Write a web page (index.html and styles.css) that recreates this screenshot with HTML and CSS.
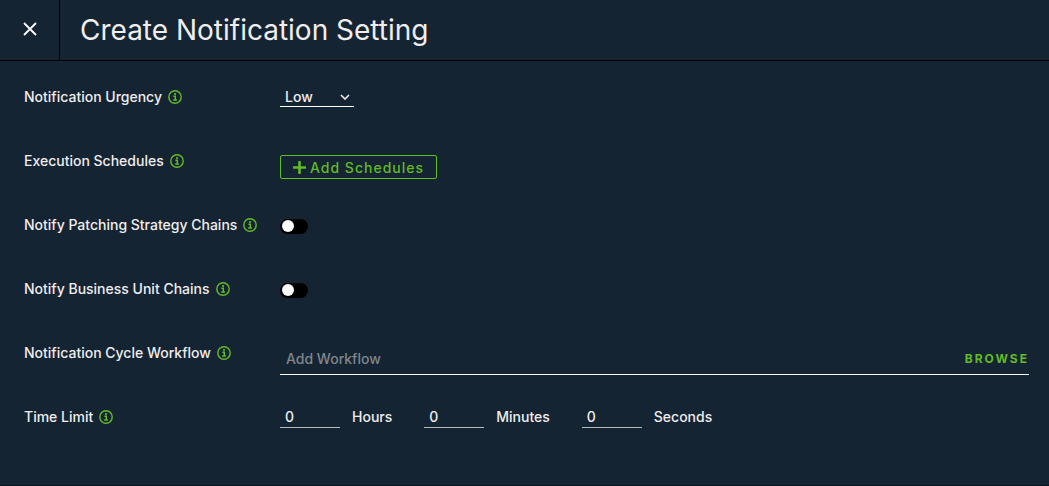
FILE: index.html
```html
<!DOCTYPE html>
<html lang="en">
<head>
    <meta charset="UTF-8">
    <meta name="viewport" content="width=device-width, initial-scale=1.0">
    <title>Create Notification Setting</title>
    <link rel="stylesheet" href="styles.css">
</head>
<body>

    <svg class="sprite" aria-hidden="true">
        <symbol id="info" viewBox="0 0 14 14">
            <circle cx="7" cy="7" r="6.2" fill="none" stroke="currentColor" stroke-width="1.4"/>
            <circle cx="7" cy="4" r="1.1" fill="currentColor"/>
            <path d="M5.4 6.3H7.3V10M5.2 10H8.9" fill="none" stroke="currentColor" stroke-width="1.4"/>
        </symbol>
    </svg>

    <header class="header">
        <button type="button" class="close-btn" aria-label="Close">
            <svg width="14" height="14" viewBox="0 0 14 14"><path d="M1 1L13 13M13 1L1 13" fill="none" stroke="currentColor" stroke-width="1.8"/></svg>
        </button>
        <h1>Create Notification Setting</h1>
    </header>

    <main>
        <form class="settings">
            <div class="row">
                <div class="row-label">
                    <label for="urgency">Notification Urgency</label>
                    <svg class="info"><use href="#info"/></svg>
                </div>
                <div class="select-wrap">
                    <select id="urgency">
                        <option selected>Low</option>
                        <option>Medium</option>
                        <option>High</option>
                    </select>
                    <svg class="caret" viewBox="0 0 10 6"><path d="M1 1L5 5L9 1" fill="none" stroke="currentColor" stroke-width="1.6"/></svg>
                </div>
            </div>

            <div class="row">
                <div class="row-label">
                    <label for="schedules">Execution Schedules</label>
                    <svg class="info"><use href="#info"/></svg>
                </div>
                <button type="button" class="add-btn lowered" id="schedules">
                    <svg width="13" height="13" viewBox="0 0 13 13"><path d="M6.5 1V12M1 6.5H12" fill="none" stroke="currentColor" stroke-width="2.6" stroke-linecap="round"/></svg>
                    Add Schedules
                </button>
            </div>

            <div class="row">
                <div class="row-label">
                    <label for="patching">Notify Patching Strategy Chains</label>
                    <svg class="info"><use href="#info"/></svg>
                </div>
                <input type="checkbox" class="toggle lowered" id="patching">
            </div>

            <div class="row">
                <div class="row-label">
                    <label for="business">Notify Business Unit Chains</label>
                    <svg class="info"><use href="#info"/></svg>
                </div>
                <input type="checkbox" class="toggle lowered" id="business">
            </div>

            <div class="row">
                <div class="row-label">
                    <label for="workflow">Notification Cycle Workflow</label>
                    <svg class="info"><use href="#info"/></svg>
                </div>
                <div class="workflow lowered">
                    <input type="text" id="workflow" placeholder="Add Workflow">
                    <button type="button" class="browse-btn">BROWSE</button>
                </div>
            </div>

            <div class="row">
                <div class="row-label">
                    <label for="hours">Time Limit</label>
                    <svg class="info"><use href="#info"/></svg>
                </div>
                <div class="time">
                    <div class="time-part">
                        <input type="number" id="hours" min="0" value="0">
                        <label for="hours">Hours</label>
                    </div>
                    <div class="time-part">
                        <input type="number" id="minutes" min="0" value="0">
                        <label for="minutes">Minutes</label>
                    </div>
                    <div class="time-part">
                        <input type="number" id="seconds" min="0" value="0">
                        <label for="seconds">Seconds</label>
                    </div>
                </div>
            </div>
        </form>
    </main>

</body>
</html>
```
FILE: styles.css
```css
* {
    box-sizing: border-box;
}

body {
    margin: 0;
    background-color: #152433;
    color: #f0eded;
    font-family: Metropolis, Inter, sans-serif;
    font-size: 14px;
    line-height: 24px;
}

button,
input,
select {
    margin: 0;
    padding: 0;
    border: none;
    border-radius: 0;
    background: none;
    color: inherit;
    font: inherit;
}

button {
    cursor: pointer;
}

.sprite {
    display: none;
}

.header {
    display: flex;
    height: 61px;
    border-bottom: 1px solid #000;
}

.close-btn {
    display: flex;
    align-items: center;
    justify-content: center;
    width: 60px;
    padding-bottom: 2px;
    border-right: 1px solid #000;
    color: #fff;
}

.header h1 {
    margin: 0;
    padding-left: 20px;
    font-size: 28px;
    font-weight: 400;
    line-height: 60px;
}

.settings {
    padding: 24px 20px 16px 24px;
    border-bottom: 1px solid #0b1420;
    font-weight: 500;
}

.row {
    display: grid;
    grid-template-columns: 256px 1fr;
    align-items: start;
    justify-items: start;
    min-height: 64px;
}

.row-label {
    display: flex;
    align-items: center;
    gap: 6px;
    white-space: nowrap;
}

.info {
    width: 14px;
    height: 14px;
    color: #62bb27;
}

.lowered {
    margin-top: 6px;
}

.select-wrap {
    position: relative;
}

.select-wrap select {
    appearance: none;
    display: block;
    width: 74px;
    height: 22px;
    padding: 0 20px 0 5px;
    border-bottom: 1px solid #fff;
}

.select-wrap option {
    background-color: #152433;
}

.caret {
    position: absolute;
    top: 9px;
    right: 4px;
    width: 10px;
    height: 6px;
    pointer-events: none;
}

.add-btn {
    display: flex;
    align-items: center;
    gap: 4px;
    height: 24px;
    padding: 1px 12px 0;
    border: 1px solid #62bb27;
    border-radius: 2px;
    color: #62bb27;
    letter-spacing: 1px;
}

.toggle {
    appearance: none;
    display: flex;
    align-items: flex-start;
    width: 28px;
    height: 15px;
    padding: 1px 2px;
    border-radius: 8px;
    background-color: #000;
    cursor: pointer;
}

.toggle::before {
    content: "";
    width: 12px;
    height: 12px;
    border-radius: 50%;
    background-color: #fafafa;
}

.toggle:checked {
    justify-content: flex-end;
    background-color: #62bb27;
}

.workflow {
    display: flex;
    justify-self: stretch;
    height: 28px;
    padding-bottom: 3px;
    border-bottom: 1px solid #fff;
}

.workflow input {
    flex: 1;
    min-width: 0;
    padding-left: 6px;
}

.workflow input::placeholder {
    color: #7f868d;
    opacity: 1;
}

.browse-btn {
    color: #62bb27;
    font-size: 12px;
    font-weight: 700;
    letter-spacing: 2px;
}

.time {
    display: flex;
    flex-wrap: wrap;
    gap: 12px 32px;
}

.time-part {
    display: flex;
    gap: 12px;
}

.time-part input {
    appearance: textfield;
    width: 60px;
    height: 23px;
    padding: 2px 0 0 5px;
    border-bottom: 1px solid #b9bdc1;
}

input:focus {
    outline: none;
}
```
